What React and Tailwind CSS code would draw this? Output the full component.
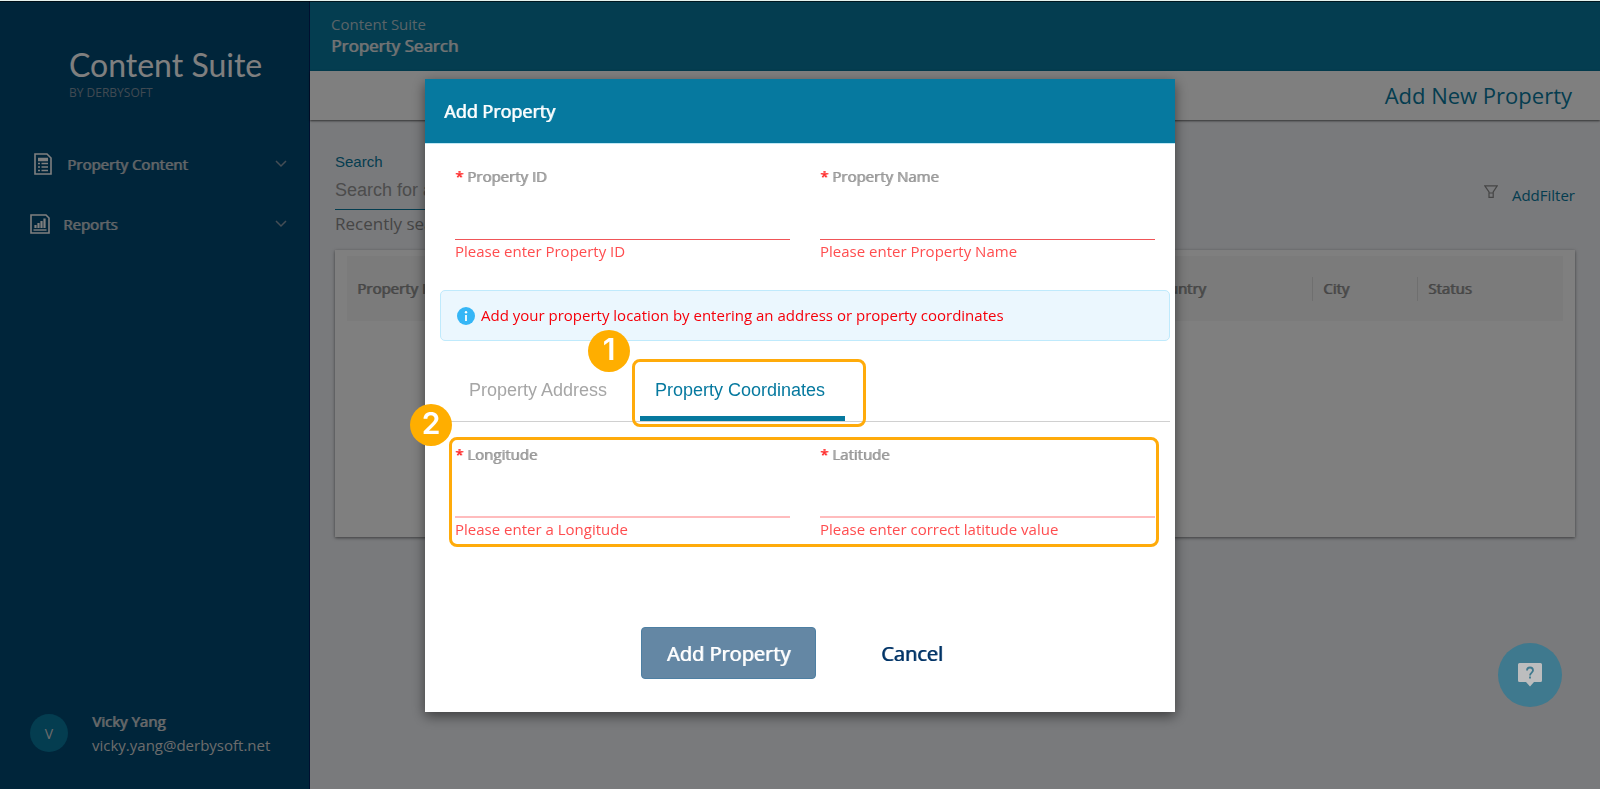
import React from "react";

const heavy = "[text-shadow:1px_0_0_color-mix(in_srgb,currentColor_80%,transparent)]";

function ChevronDown() {
  return (
    <svg viewBox="0 0 12 8" className="h-2 w-3" fill="none" stroke="#8b9dab" strokeWidth="1.5" aria-hidden="true">
      <path d="M1 1l5 5 5-5" />
    </svg>
  );
}

function PropertyIcon() {
  return (
    <svg viewBox="0 0 18 22" className="h-[22px] w-[18px]" fill="none" stroke="#fff" strokeWidth="1.6" aria-hidden="true">
      <path d="M1 1h12l4 4v16H1z" />
      <path d="M4 6.500h10" strokeWidth="3.500" />
      <path d="M4 10.500h2M4 14h2M4 17.500h2M7.500 10.500H14M7.500 14H14M7.500 17.500H14" strokeWidth="1.600" />
    </svg>
  );
}

function ReportsIcon() {
  return (
    <svg viewBox="0 0 20 20" className="size-5" fill="none" stroke="#fff" strokeWidth="1.6" aria-hidden="true">
      <path d="M1 1h15l3 3v15H1z" />
      <path d="M5.500 14v-3M8.500 14V9M11.500 14V7M14.500 14V4.500" strokeWidth="2.200" />
      <path d="M3.500 16h13" strokeWidth="1.400" />
    </svg>
  );
}

function FunnelIcon() {
  return (
    <svg viewBox="0 0 14 13" className="h-[13px] w-[14px]" fill="none" stroke="#8a8a8a" strokeWidth="1.2" aria-hidden="true">
      <path d="M.8.8h12.400L9.200 7v5.400H5V7z M5 8h4.200" />
    </svg>
  );
}

function InfoIcon() {
  return (
    <svg viewBox="0 0 18 18" className="size-[18px] shrink-0" aria-hidden="true">
      <circle cx="9" cy="9" r="9" fill="#35b6f6" />
      <circle cx="9" cy="5.300" r="1.200" fill="#fff" />
      <path d="M9 8v6" stroke="#fff" strokeWidth="1.800" />
    </svg>
  );
}

function NavItem({ icon, label, className }) {
  return (
    <button type="button" className={"flex h-[60px] w-full items-center pr-[22px] text-[15px] text-[#c9ced2] " + className}>
      {icon}
      <span className={"flex-1 text-left " + heavy}>{label}</span>
      <ChevronDown />
    </button>
  );
}

function Field({ id, label, error, lineClass }) {
  return (
    <div className="flex flex-col">
      <label htmlFor={id} className={"flex h-6 gap-1 text-[15px] leading-6 text-[#999] " + heavy}>
        <span className="w-2 text-[#ff2a2a]">*</span>
        {label}
      </label>
      <input id={id} type="text" aria-describedby={id + "-error"} className={"h-[52px] w-full bg-transparent text-base outline-none " + lineClass} />
      <p id={id + "-error"} className="h-6 text-[15px] leading-[23px] text-[#ff4d4f]">{error}</p>
    </div>
  );
}

function Marker({ children, className }) {
  return (
    <span className={"absolute flex size-[42px] items-center justify-center rounded-full bg-[#ffae00] pb-1 font-['Inter',sans-serif] text-[30px] font-semibold leading-none text-white " + className}>
      {children}
    </span>
  );
}

function Sidebar() {
  return (
    <aside className="flex w-[310px] shrink-0 flex-col border-r border-[#002060] bg-[#004a74]">
      <div className="pl-[69px] pt-[43px]">
        <div className="font-['Lato',sans-serif] text-[32px] leading-[42px] text-white">Content Suite</div>
        <div className="text-[12px] leading-[14px] text-[#8095a5]">BY DERBYSOFT</div>
      </div>
      <nav className="flex flex-col pt-[34px]">
        <NavItem icon={<PropertyIcon />} label="Property Content" className="gap-[15px] pl-[34px]" />
        <NavItem icon={<ReportsIcon />} label="Reports" className="gap-[13px] pl-[30px]" />
      </nav>
      <div className="mt-auto flex items-center gap-6 pb-8 pl-[30px]">
        <span className="flex size-[38px] items-center justify-center rounded-full bg-[#087aa0] text-[14px] text-[#d8d8d8]">V</span>
        <div className="text-[15px] leading-6 text-[#d8d8d8]">
          <div className={heavy}>Vicky Yang</div>
          <div>vicky.yang@derbysoft.net</div>
        </div>
      </div>
    </aside>
  );
}

function SearchPage() {
  return (
    <main className="flex min-w-0 flex-1 flex-col bg-[#f2f4f8]">
      <header className="h-[70px] bg-[#087aa0] pl-[21px] pt-3">
        <div className="text-[15px] leading-[22px] text-[#b4c8d0]">Content Suite</div>
        <h1 className={"text-[17px] leading-[22px] text-[#e8e8e8] " + heavy}>Property Search</h1>
      </header>
      <div className="flex h-[49px] items-center justify-end bg-white pr-7 shadow-[0_1px_2px_rgba(0,0,0,0.6)]">
        <button type="button" className="text-[22px] text-[#087aa0]">Add New Property</button>
      </div>
      <div className="flex flex-col px-[25px] pt-[30px]">
        <div className="flex items-center">
          <div className="w-[600px]">
            <label htmlFor="search" className="block h-6 font-['Liberation_Sans',sans-serif] text-[15px] leading-6 text-[#087aa0]">Search</label>
            <input
              id="search"
              type="text"
              placeholder="Search for a property"
              className="h-[36px] w-full border-b border-[#087aa0] bg-transparent pb-[2px] font-['Liberation_Sans',sans-serif] text-[18px] outline-none placeholder:text-[#999]"
            />
          </div>
          <button type="button" className="ml-auto flex items-center gap-[14px] pt-[30px] text-[15px] text-[#087aa0]">
            <span className="pb-2"><FunnelIcon /></span>
            AddFilter
          </button>
        </div>
        <p className="h-[40px] text-[17px] leading-[27px] text-[#8c8c8c]">Recently searched</p>
        <section className="h-[287px] bg-white px-3 pt-[6px] shadow-[0_1px_3px_rgba(0,0,0,0.5)]">
          <table className="w-full table-fixed text-left text-[15px] text-[#8c8c8c]">
            <thead>
              <tr className={"h-[65px] bg-[#f6f6f6] " + heavy}>
                <th className="pl-[10px] font-normal">Property ID</th>
                <th className="font-normal">Property Name</th>
                <th className="w-[170px] pl-2 font-normal">Country</th>
                <th className="w-[105px] font-normal"><div className="flex h-6 items-center border-l border-[#dedede] pl-[10px]">City</div></th>
                <th className="w-[146px] font-normal"><div className="flex h-6 items-center border-l border-[#dedede] pl-[10px]">Status</div></th>
              </tr>
            </thead>
          </table>
        </section>
      </div>
    </main>
  );
}

function AddPropertyDialog() {
  return (
    <div role="dialog" aria-modal="true" aria-labelledby="dialog-title" className="w-[750px] bg-white shadow-[0_4px_12px_rgba(0,0,0,0.5)]">
      <div className="flex h-[65px] items-center border-b border-[#bfe8f5] bg-[#06799f] pl-[19px]">
        <h2 id="dialog-title" className={"text-[18px] text-white " + heavy}>Add Property</h2>
      </div>
      <form className="pb-[33px] pl-[15px] pr-[5px] pt-5">
        <div className="grid grid-cols-2 gap-[30px] px-[15px]">
          <Field id="property-id" label="Property ID" error="Please enter Property ID" lineClass="border-b border-[#f05558]" />
          <Field id="property-name" label="Property Name" error="Please enter Property Name" lineClass="border-b border-[#f05558]" />
        </div>
        <div className="mt-[26px] flex h-[51px] items-center gap-[6px] rounded-[5px] border border-[#bfeafc] bg-[#ebf7fe] pl-4 text-[15px] text-[#f5000a]">
          <InfoIcon />
          Add your property location by entering an address or property coordinates
        </div>
        <div role="tablist" className="mt-5 flex h-[61px] border-b border-[#d0d0d0] pl-[14px] font-['Liberation_Sans',sans-serif] text-[18px]">
          <button type="button" role="tab" aria-selected="false" className="w-[186px] pb-[2px] pl-[15px] text-left text-[#a6a6a6]">Property Address</button>
          <div className="relative">
            <button type="button" role="tab" aria-selected="true" className="h-full w-[205px] border-b-[5px] border-[#06799f] pl-[15px] pt-1 text-left text-[#06799f]">Property Coordinates</button>
            <span className="pointer-events-none absolute -bottom-[6px] -left-2 -right-[21px] -top-[2px] rounded-lg border-[3px] border-[#ffab0a]" />
            <Marker className="-left-[52px] -top-[31px]">1</Marker>
          </div>
        </div>
        <div className="relative mt-5 grid grid-cols-2 gap-[30px] px-[15px]">
          <Field id="longitude" label="Longitude" error="Please enter a Longitude" lineClass="border-b-2 border-[#ffbcbd]" />
          <Field id="latitude" label="Latitude" error="Please enter correct latitude value" lineClass="border-b-2 border-[#ffbcbd]" />
          <span className="pointer-events-none absolute -bottom-[5px] -top-[5px] left-[9px] right-[11px] rounded-lg border-[3px] border-[#ffab0a]" />
          <Marker className="-left-[30px] -top-[38px]">2</Marker>
        </div>
        <div className="mt-[85px] flex items-center gap-[48px] pl-[201px]">
          <button type="button" className={"h-[52px] w-[175px] rounded border border-[#4d7fa3] bg-[#6487a4] pt-[2px] text-[20px] text-white " + heavy}>Add Property</button>
          <button type="button" className={"px-[17px] pt-[2px] text-[20px] text-[#003366] " + heavy}>Cancel</button>
        </div>
      </form>
    </div>
  );
}

export default function App() {
  return (
    <div className="flex min-h-screen border-t border-[#e6f2ee] font-['Open_Sans',sans-serif]">
      <Sidebar />
      <SearchPage />
      <div className="fixed inset-x-0 bottom-0 top-px flex items-start justify-center overflow-auto border-t border-black/60 bg-black/50 pt-[77px]">
        <AddPropertyDialog />
      </div>
      <button type="button" aria-label="Help" className="fixed bottom-[82px] right-[38px] flex size-16 items-center justify-center rounded-full bg-[#06799f] opacity-50">
        <svg viewBox="0 0 24 24" className="size-6" aria-hidden="true">
          <path d="M1.500 0h21Q24 0 24 1.500v16Q24 19 22.500 19H16l-4 4.500L8 19H1.500Q0 19 0 17.500v-16Q0 0 1.500 0z" fill="#fff" />
          <path d="M9 7.500c0-4 6-4 6 0 0 2-3 2.300-3 5M12 13.500v2" fill="none" stroke="#06799f" strokeWidth="1.800" />
        </svg>
      </button>
    </div>
  );
}
